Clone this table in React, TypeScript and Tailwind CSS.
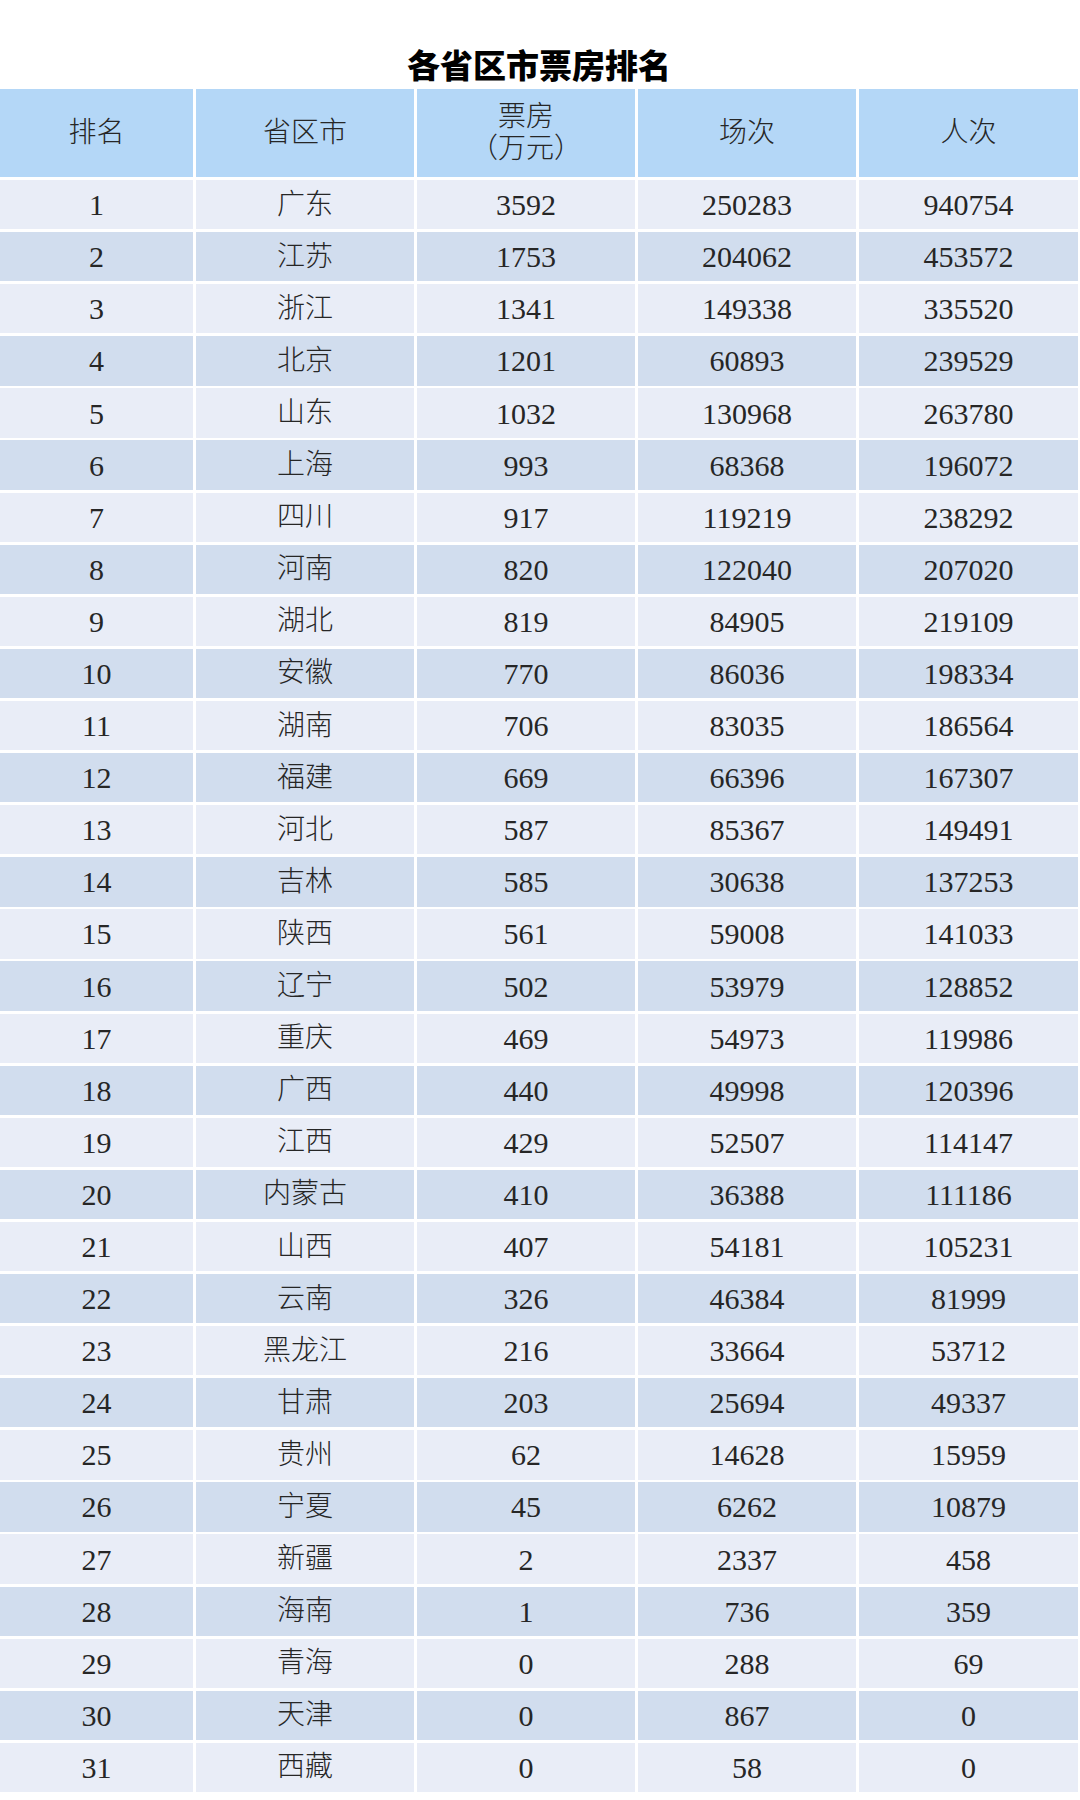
import React from "react";

const rows: [number, string, number, number, number][] = [
  [1, "广东", 3592, 250283, 940754],
  [2, "江苏", 1753, 204062, 453572],
  [3, "浙江", 1341, 149338, 335520],
  [4, "北京", 1201, 60893, 239529],
  [5, "山东", 1032, 130968, 263780],
  [6, "上海", 993, 68368, 196072],
  [7, "四川", 917, 119219, 238292],
  [8, "河南", 820, 122040, 207020],
  [9, "湖北", 819, 84905, 219109],
  [10, "安徽", 770, 86036, 198334],
  [11, "湖南", 706, 83035, 186564],
  [12, "福建", 669, 66396, 167307],
  [13, "河北", 587, 85367, 149491],
  [14, "吉林", 585, 30638, 137253],
  [15, "陕西", 561, 59008, 141033],
  [16, "辽宁", 502, 53979, 128852],
  [17, "重庆", 469, 54973, 119986],
  [18, "广西", 440, 49998, 120396],
  [19, "江西", 429, 52507, 114147],
  [20, "内蒙古", 410, 36388, 111186],
  [21, "山西", 407, 54181, 105231],
  [22, "云南", 326, 46384, 81999],
  [23, "黑龙江", 216, 33664, 53712],
  [24, "甘肃", 203, 25694, 49337],
  [25, "贵州", 62, 14628, 15959],
  [26, "宁夏", 45, 6262, 10879],
  [27, "新疆", 2, 2337, 458],
  [28, "海南", 1, 736, 359],
  [29, "青海", 0, 288, 69],
  [30, "天津", 0, 867, 0],
  [31, "西藏", 0, 58, 0],
];

const serif = "font-['Liberation_Serif','Noto_Sans_CJK_SC',serif]";
const cols = "grid grid-cols-[193px_218px_218px_218px_219px] gap-x-[3px]";
const head = "bg-[#b4d7f7] flex items-center justify-center text-[28px] font-light";

export default function App() {
  return (
    <div className="w-[1080px] h-[1800px] bg-white text-[#262626] overflow-hidden">
      <div className="h-[89px] flex items-end justify-center pb-[8px] pr-[2px]">
        <h1 className="text-[33px] leading-none font-black font-['Noto_Sans_CJK_SC',sans-serif] text-black">
          各省区市票房排名
        </h1>
      </div>
      <div className={`w-[1078px] ${serif}`}>
        <div className={`${cols} h-[88px]`}>
          <div className={head}>排名</div>
          <div className={head}>省区市</div>
          <div className={`${head} flex-col leading-[32px]`}>
            <span>票房</span>
            <span>（万元）</span>
          </div>
          <div className={head}>场次</div>
          <div className={head}>人次</div>
        </div>
        <div className="mt-[3px] flex flex-col gap-y-[2.8px]">
          {rows.map((r, i) => {
            const bg = i % 2 === 0 ? "bg-[#e9edf7]" : "bg-[#d1ddee]";
            return (
              <div key={r[0]} className={`${cols} h-[49.3px] text-[30px]`}>
                <div className={`${bg} flex items-center justify-center`}>{r[0]}</div>
                <div className={`${bg} flex items-center justify-center text-[28px] font-light`}>{r[1]}</div>
                <div className={`${bg} flex items-center justify-center`}>{r[2]}</div>
                <div className={`${bg} flex items-center justify-center`}>{r[3]}</div>
                <div className={`${bg} flex items-center justify-center`}>{r[4]}</div>
              </div>
            );
          })}
        </div>
      </div>
    </div>
  );
}
